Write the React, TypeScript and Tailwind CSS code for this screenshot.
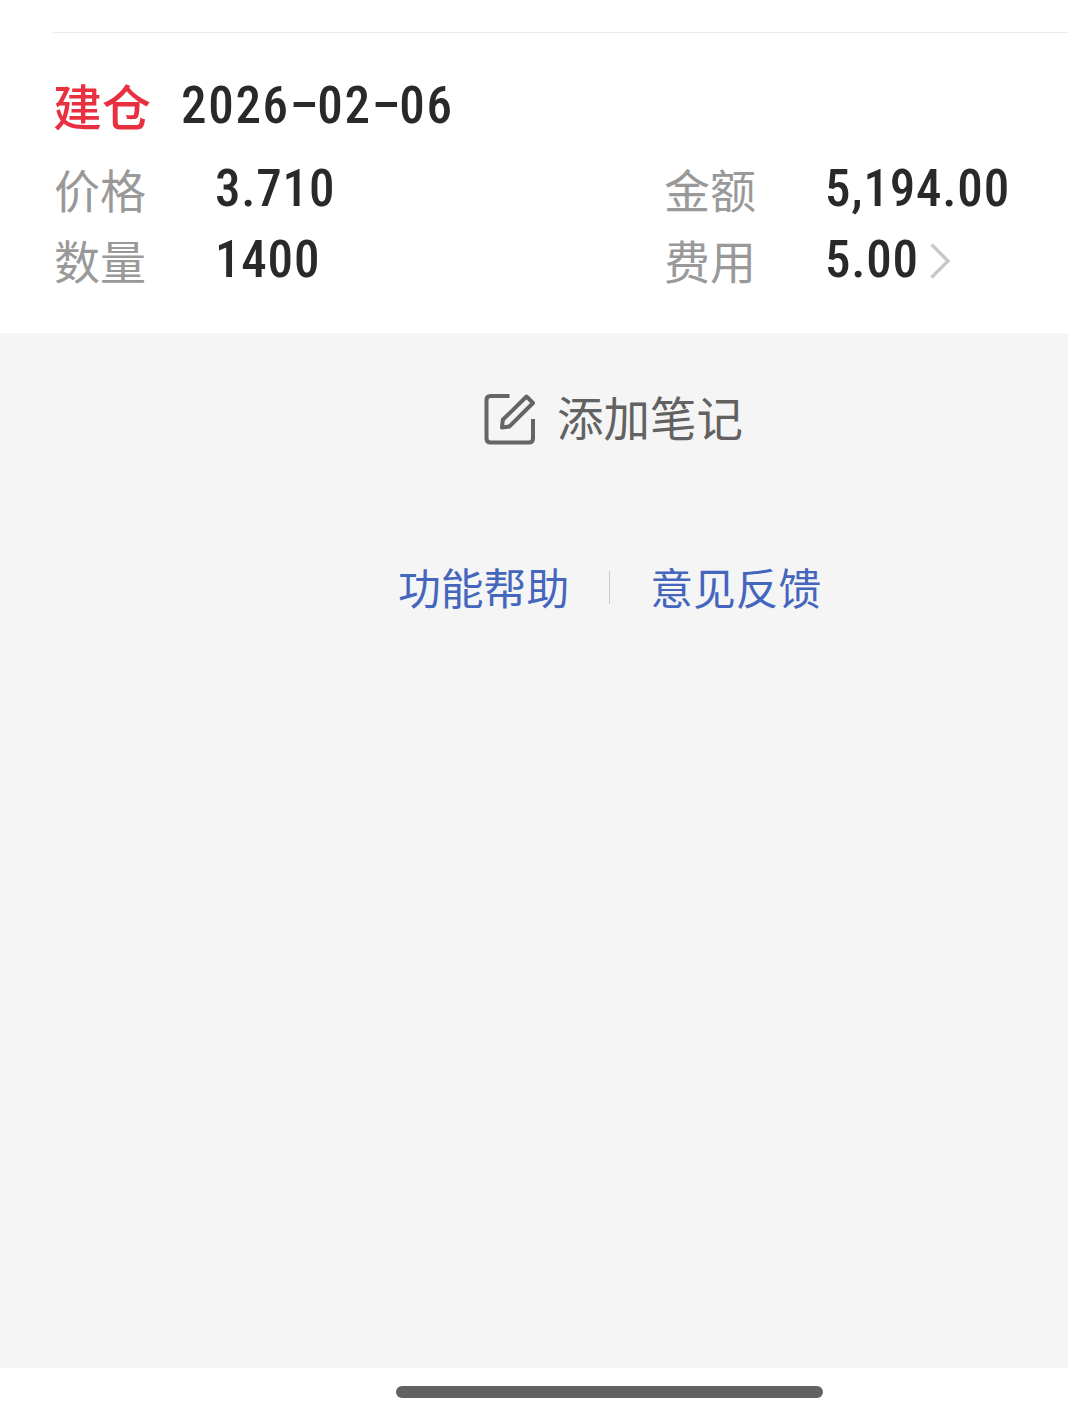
import React from "react";

const cjk = "font-['Noto_Sans_CJK_SC',sans-serif] whitespace-nowrap";
const num = "font-['Roboto','Noto_Sans',sans-serif] font-medium [font-stretch:87.5%] whitespace-nowrap text-[51px] text-[#292929]";

function Field({ label, value, arrow }: { label: string; value: string; arrow?: boolean }) {
  return (
    <div className="flex h-[71px] items-center">
      <span className={`${cjk} w-[161px] text-[46px] leading-[71px] text-[#999]`}>{label}</span>
      <span className={`${num} tracking-[0.8px] leading-[71px]`}>{value}</span>
      {arrow && (
        <svg className="ml-[10px] mt-0.5 h-9 w-6" viewBox="0 0 24 36" fill="none" stroke="#c8c8c8" strokeWidth="3.4">
          <path d="M2.5 1.5 L19 18 L2.5 34.5" />
        </svg>
      )}
    </div>
  );
}

function Dash() {
  return <span className="inline-block w-[27.5px] text-center leading-none tracking-normal">–</span>;
}

export default function App() {
  return (
    <div className="flex h-[1416px] w-[1068px] flex-col overflow-hidden bg-white">
      <section className="h-[333px] pl-[53px] pt-8">
        <div className="h-px bg-[#ebebeb]" />
        <div className="mt-[36px] flex h-[72px] items-center">
          <span className={`${cjk} w-[128px] text-[49px] font-medium leading-[68px] text-[#e83040]`}>建仓</span>
          <span className={`${num} mt-0.5 tracking-[1.7px]`}>
            2026<Dash />02<Dash />06
          </span>
        </div>
        <div className="mt-[12px] grid grid-cols-[610px_1fr] pl-px">
          <Field label="价格" value="3.710" />
          <Field label="金额" value="5,194.00" />
          <Field label="数量" value="1400" />
          <Field label="费用" value="5.00" arrow />
        </div>
      </section>
      <main className="h-[1035px] bg-[#f5f5f5]">
        <div className="flex h-[172px] items-center pl-[484px]">
          <svg className="h-[52px] w-[52px]" viewBox="0 0 52 52" fill="none" stroke="#656565" strokeWidth="4">
            <path d="M25.5 3H6.5Q2.5 3 2.5 7V45.5Q2.5 49.5 6.5 49.5H45Q49 49.5 49 45.5V26" />
            <path d="M18 34.5L18.8 26.8L42.5 3.5L49 10L25.3 33.5Z" strokeLinejoin="round" />
          </svg>
          <span className={`${cjk} mb-1.5 ml-[21px] text-[46.5px] text-[#626262]`}>添加笔记</span>
        </div>
        <div className="flex h-[164px] items-center pl-[398px] text-[42.8px] text-[#4466bd]">
          <span className={`${cjk} mb-px`}>功能帮助</span>
          <span className="mx-10 h-[33px] w-px bg-[#ccc]" />
          <span className={`${cjk} mb-px`}>意见反馈</span>
        </div>
      </main>
      <footer className="h-12 pl-[396px] pt-[18px]">
        <div className="h-3 w-[427px] rounded-full bg-[#626262]" />
      </footer>
    </div>
  );
}
